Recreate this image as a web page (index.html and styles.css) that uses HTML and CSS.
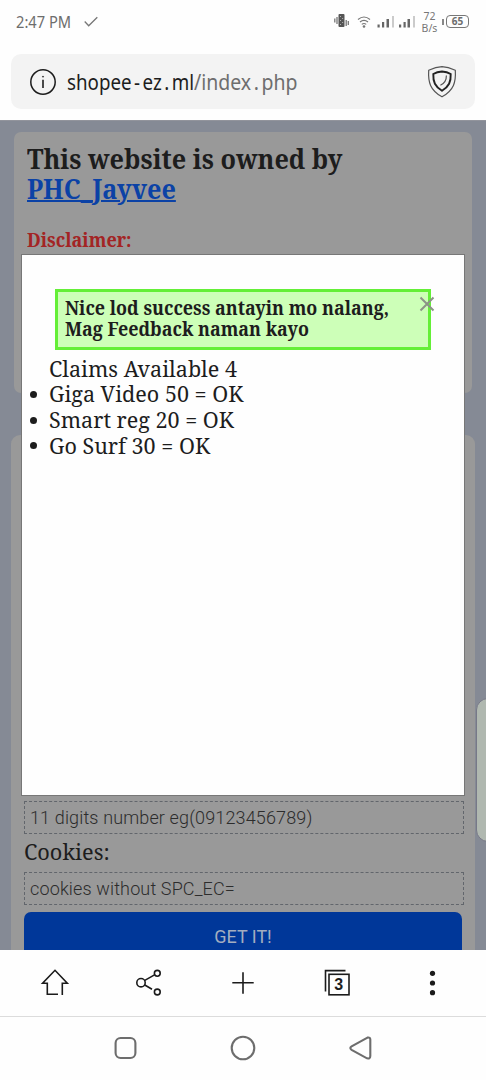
FILE: index.html
```
<!DOCTYPE html>
<html lang="en">
<head>
<meta charset="utf-8">
<title>shopee-ez.ml</title>
<link rel="stylesheet" href="styles.css">
</head>
<body>
<div class="phone">
  <header class="status">
    <span class="fit clock">2:47 PM</span>
    <svg class="tick" width="14" height="12" viewBox="0 0 14 12"><path d="M.7 5.500 4.700 9.800 13.300 1.300"/></svg>
    <svg class="signals" width="84" height="18" viewBox="0 0 84 18">
      <rect x="4.500" y="2" width="6" height="13" rx="1" fill="#555"/>
      <path d="M3 5v7M.8 6.500v4M12.200 8v6M14.300 9v4" stroke="#777" stroke-width="1.300"/>
      <path d="M6 4.500h.8M8.300 6.500h.8M6 8.500h.8M8.300 10.500h.8M6 12.500h.8" stroke="#ccc"/>
      <g fill="none" stroke="#777" stroke-width="1.200"><path d="M24 7.500q6-5 12 0M26 10q4-3.300 8 0M27.800 12.400q2.200-1.800 4.400 0"/></g>
      <circle cx="30" cy="14.500" r="1.300" fill="#777"/>
      <g fill="#666"><rect x="43.500" y="12.500" width="2.200" height="3"/><rect x="48" y="10" width="2.200" height="5.500"/><rect x="52.500" y="7" width="2.500" height="8.500"/><rect x="65" y="12.500" width="2.200" height="3"/><rect x="69.500" y="10" width="2.200" height="5.500"/><rect x="73.500" y="7" width="2.500" height="8.500"/></g>
      <path d="M59 4v11.500M80 4v11.500" stroke="#bbb" stroke-width="1.500"/>
    </svg>
    <span class="speed"><span>72</span><span>B/s</span></span>
    <span class="battery"><i class="nub"></i><b class="level">65</b></span>
  </header>

  <div class="address">
    <svg width="28" height="28" viewBox="0 0 28 28" fill="none" stroke="#1d1d1d"><circle cx="14" cy="14" r="12.200" stroke-width="1.500"/><path d="M14 11.800V20" stroke-width="1.600"/><circle cx="14" cy="8.700" r=".5"/></svg>
    <span class="url"><span class="fit host">shopee<em>-</em>ez<em>.</em>ml</span><span class="fit path">/index<em>.</em>php</span></span>
    <svg class="shield" width="30" height="34" viewBox="0 0 30 34" fill="none" stroke="#222"><path d="M15 1.700Q21 2 28.300 5.300C29 17 27 25 15 31.800C3 25 1 17 1.700 5.300Q9 2 15 1.700Z" stroke="#555" stroke-width="1.200"/><path d="M15 6.500Q20 6.700 23.700 9C24 17 22 21.500 15 25.800C8 21.500 6 17 6.300 9Q10 6.700 15 6.500Z" stroke-width="1.900"/><path d="M19.400 10.500Q19.500 17.500 13.400 20.300" stroke="#555" stroke-width="1.200"/></svg>
  </div>

  <main class="page">
    <section class="card intro">
      <h1><span class="fit title">This website is owned by</span><br><a class="fit owner">PHC_Jayvee</a></h1>
      <p class="warn"><span class="fit disclaimer">Disclaimer:</span></p>
    </section>
    <section class="card form">
      <div class="field">11 digits number eg(09123456789)</div>
      <label><span class="fit cookies">Cookies:</span></label>
      <div class="field">cookies without SPC_EC=</div>
      <button class="submit">GET IT!</button>
    </section>
    <div class="modal">
      <div class="notice"><span class="fit line">Nice lod success antayin mo nalang,</span><span class="fit line">Mag Feedback naman kayo</span>
        <svg class="close" width="16" height="16" viewBox="0 0 16 16"><path d="M1.500 1.500 14.500 14.500M14.500 1.500 1.500 14.500"/></svg>
      </div>
      <ul class="claims">
        <li class="plain"><span class="fit">Claims Available 4</span></li>
        <li><span class="fit">Giga Video 50 = OK</span></li>
        <li><span class="fit">Smart reg 20 = OK</span></li>
        <li><span class="fit">Go Surf 30 = OK</span></li>
      </ul>
    </div>
    <div class="edge"></div>
  </main>

  <nav class="toolbar">
    <svg viewBox="0 0 30 30"><path d="M18 26.300H7.300V15.300H2.600L15 2.300 27.300 15.300H22.300V27"/></svg>
    <svg viewBox="0 0 30 30"><circle cx="7" cy="14.700" r="4.200"/><circle cx="23.300" cy="5.300" r="2.900"/><circle cx="23.300" cy="24" r="2.900"/><path d="M10.800 12.400 20.500 6.900M10.800 17 18 21.300"/></svg>
    <svg viewBox="0 0 30 30"><path d="M14 4.300V25.700M3.300 14.800H24.700"/></svg>
    <span class="tabs"><svg viewBox="0 0 30 30"><rect x="6" y="6.300" width="20" height="20.500"/><path d="M2.500 23.500V2.600H22.500"/></svg><b>3</b></span>
    <svg viewBox="0 0 30 30"><g fill="#1b1b1b" stroke="none"><circle cx="15.500" cy="5.300" r="2.600"/><circle cx="15.500" cy="15" r="2.600"/><circle cx="15.500" cy="24.700" r="2.600"/></g></svg>
  </nav>
  <nav class="system">
    <svg viewBox="0 0 30 30"><rect x="5.600" y="5" width="19.800" height="20" rx="5"/></svg>
    <svg viewBox="0 0 30 30"><circle cx="15" cy="15" r="11.300"/></svg>
    <svg viewBox="0 0 30 30"><path d="M21.500 4.600 5.600 13.300Q3 15 5.600 16.800L21 25.300Q24.300 26 24.300 23V6.600Q24.300 4 21.500 4.600Z"/></svg>
  </nav>
</div>
</body>
</html>
```
FILE: styles.css
```
*{box-sizing:border-box}
body{margin:0;background:#fefefe;font-family:"Noto Serif","DejaVu Serif",serif;color:#1d1d1d}
.phone{width:486px;height:1080px;display:flex;flex-direction:column;overflow:hidden}
.fit{display:inline-block;white-space:nowrap;transform-origin:0 50%}
.status{height:43px;display:flex;align-items:center;padding:0 17px 0 16px;font-family:"Noto Sans",sans-serif;color:#6d6d6d}
.clock{font-size:16.300px;width:55px;transform:scaleX(.9)}
.tick{margin-left:13px;fill:none;stroke:#777;stroke-width:1.300}
.signals{margin-left:236px;margin-top:-1px}
.speed{display:flex;flex-direction:column;align-items:center;width:21px;margin-left:1px;font-size:10.500px;line-height:12px;color:#777}
.battery{display:flex;align-items:center;margin-left:2px}
.nub{width:2px;height:6px;background:#888;margin-right:2px}
.level{width:23px;height:13px;border:1.500px solid #777;border-radius:4px;font:700 10px/11px "Noto Sans",sans-serif;text-align:center}
.address{height:55px;margin:11px 11px 11px;padding:0 18px 0 18px;border-radius:10px;background:#f3f3f3;display:flex;align-items:center;font-family:"Noto Sans",sans-serif;font-size:22.500px}
.url{display:flex;margin-left:10px;flex:1}
.host{transform:scaleX(.833);margin-right:-26px}
.path{color:#6e6e6e;transform:scaleX(.865);margin-right:-17px}
.url em{font-style:normal;margin:0 3px}
.page{height:830px;position:relative;background:#858a95;border-top:1px solid #92949c;overflow:hidden}
.card{background:#999;border-radius:7px}
.intro{height:261px;margin:11px 14px 0;padding:12px 13px;overflow:hidden}
h1{margin:0;font-size:27px;line-height:30px;height:60px}
h1 .fit{transform:scaleX(.936);vertical-align:top}
.owner{color:#0b42a6;text-decoration:underline;text-decoration-thickness:2px}
.warn{margin:24px 0 0;font-size:19.800px;line-height:24px;font-weight:700;color:#a32424}
.disclaimer{transform:scaleX(.909)}
.form{margin:42px 11px 0;height:516px;padding:366px 12px 0 13px;border-radius:9px 9px 0 0}
.field{height:33px;width:440px;border:1px dashed #62666c;padding:0 5px;font:300 18px/32px Roboto,sans-serif;letter-spacing:.14px;color:#2c2c2c}
label{display:block;height:38px;line-height:36px;font-size:22.500px}
.cookies{transform:scaleX(.965)}
.submit{display:block;margin-top:7px;width:438px;height:50px;border:0;border-radius:7px;background:#003799;color:#a3adc0;font:18px/45px Roboto,sans-serif;padding:0 0 2px}
.modal{position:absolute;left:21px;top:133px;width:444px;height:542px;background:#fefefe;border:1px solid #777;padding:34px 33px 0}
.notice{position:relative;width:376px;height:61px;border:3px solid #64ef37;background:#cdffb8;padding:5px 7px;font-weight:700;font-size:19.500px;line-height:21px}
.line{display:block;width:max-content;transform:scaleX(.919)}
.close{position:absolute;right:-7px;top:4px;fill:none;stroke:#8c9387;stroke-width:2}
.claims{margin:5.500px 0 0 -26px;padding:0;list-style:none;font-size:22.500px;line-height:25.700px}
.claims li{height:25.700px;display:flex;align-items:center}
.claims li::before{content:"";width:7px;height:7px;border-radius:50%;background:#1d1d1d;margin:1px 12px 0 1px}
.claims .plain::before{background:none}
.claims .fit{transform:scaleX(.958)}
.edge{position:absolute;right:-14px;top:577px;width:24px;height:144px;border-radius:13px;background:#b0b8b0;border:1px solid #777887}
.toolbar{height:67px;flex:none;display:flex;justify-content:space-between;padding:18px 39px 0 40px;border-bottom:1px solid #dcdcdc}
.toolbar svg{display:block;width:30px;height:30px;fill:none;stroke:#1b1b1b;stroke-width:1.600}
.tabs{position:relative;width:30px;height:30px}
.tabs b{position:absolute;left:7px;top:8px;width:18px;text-align:center;font:700 16px/18px "Liberation Sans",sans-serif}
.system{height:63px;display:flex;justify-content:space-between;align-items:center;padding:0 110px 2px}
.system svg{width:30px;height:30px;fill:none;stroke:#6d6d6d;stroke-width:2.100}
```
